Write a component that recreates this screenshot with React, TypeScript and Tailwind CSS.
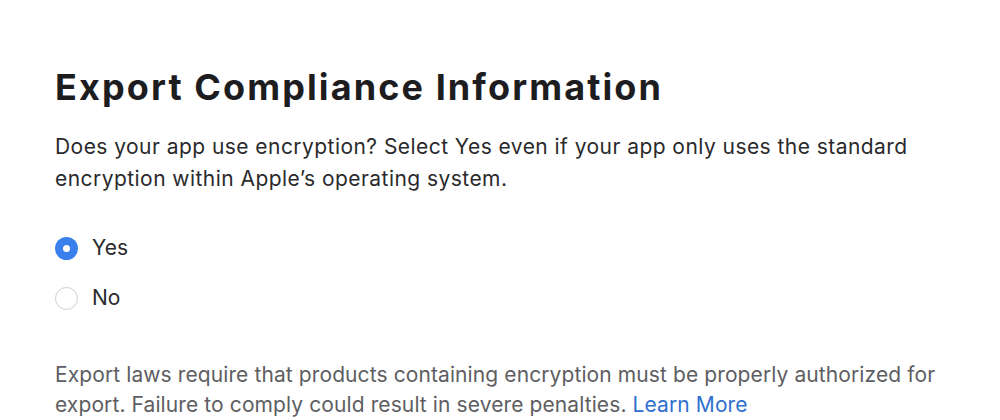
export default function App() {
  return (
    <div className="w-[1000px] h-[420px] bg-white overflow-hidden" style={{ fontFamily: "Inter, 'Noto Sans', sans-serif" }}>
      <div className="pl-[55px] pt-[65px]">
        <h1 className="text-[36px] leading-[44px] font-bold text-[#1d1d1f] tracking-[2.1px]">Export Compliance Information</h1>
        <p className="mt-[22px] text-[21px] leading-[32px] text-[#2a2a2c] tracking-[0.45px] w-[900px]">
          Does your app use encryption? Select Yes even if your app only uses the standard encryption within Apple’s operating system.
        </p>
        <div className="mt-[41px] flex flex-col gap-[26px]">
          <label className="flex items-center gap-[14px] text-[21px] leading-[24px] text-[#2a2a2c]">
            <span className="w-[23px] h-[23px] rounded-full bg-[#3a80ec] flex items-center justify-center">
              <span className="w-[7px] h-[7px] rounded-full bg-white" />
            </span>
            Yes
          </label>
          <label className="flex items-center gap-[14px] text-[21px] leading-[24px] text-[#2a2a2c]">
            <span className="w-[23px] h-[23px] rounded-full border-[1.5px] border-[#cfcfcf] bg-white" />
            No
          </label>
        </div>
        <p className="mt-[50px] text-[21px] leading-[30px] text-[#5e5e62] tracking-[0.1px] w-[910px]">
          Export laws require that products containing encryption must be properly authorized for export. Failure to comply could result in severe penalties. <span className="text-[#2f6fd0]">Learn More</span>
        </p>
      </div>
    </div>
  );
}
